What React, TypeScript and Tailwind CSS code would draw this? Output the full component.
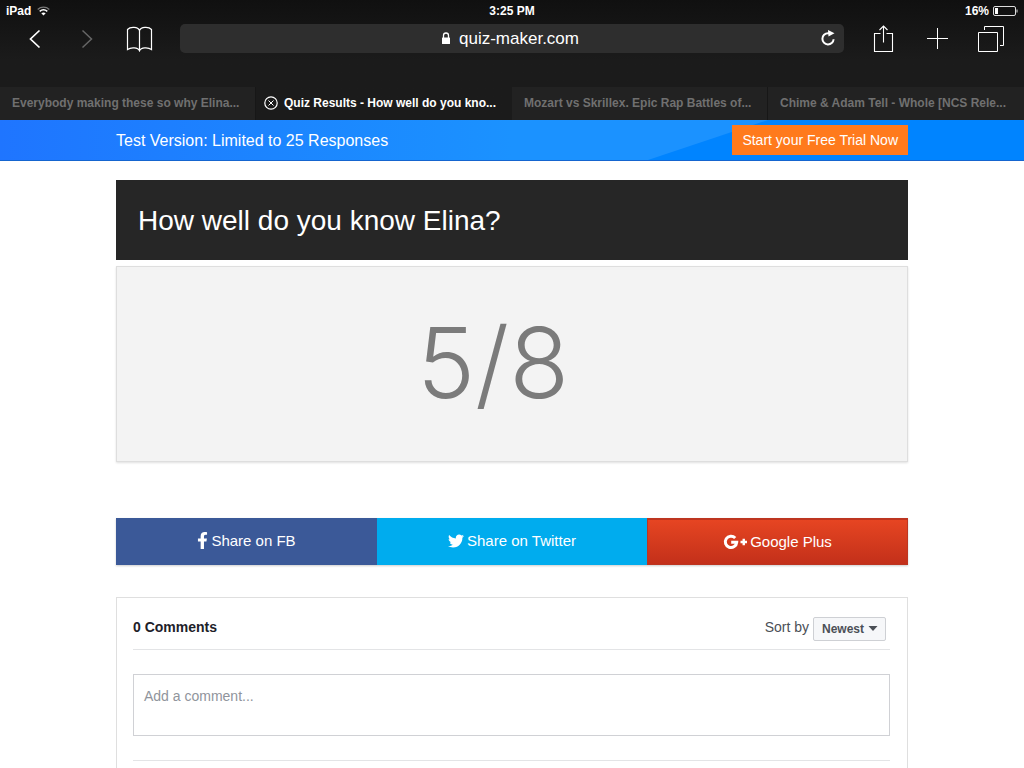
import { FaFacebookF, FaTwitter } from "react-icons/fa";

const tabs = [
  { title: "Everybody making these so why Elina...", active: false },
  { title: "Quiz Results - How well do you kno...", active: true },
  { title: "Mozart vs Skrillex. Epic Rap Battles of...", active: false },
  { title: "Chime & Adam Tell - Whole [NCS Rele...", active: false },
];

function StatusBar() {
  return (
    <div className="grid h-[22px] grid-cols-3 items-center px-[6px] text-[12px] leading-4 font-bold text-white">
      <div className="flex items-center gap-[6px]">
        <span>iPad</span>
        <svg width="13" height="10" viewBox="0 0 13 10" fill="none" aria-hidden="true">
          <path d="M.7 3.4C4 .4 9 .4 12.3 3.4" stroke="#777" strokeWidth="1.3" />
          <path d="M2.7 5.4c2.3-2 5.3-2 7.6 0" stroke="#fff" strokeWidth="1.5" />
          <path d="M4.3 7.2c1.3-1.1 3.1-1.1 4.4 0L6.5 9.5z" fill="#fff" />
        </svg>
      </div>
      <span className="text-center">3:25 PM</span>
      <div className="flex items-center justify-end gap-1">
        <span>16%</span>
        <svg width="25" height="10" viewBox="0 0 25 10" fill="none" aria-hidden="true">
          <rect x=".5" y=".5" width="22" height="9" rx="1.5" stroke="#ddd" />
          <rect x="2" y="2" width="3" height="6" fill="#fff" />
          <path d="M24 3.5v3" stroke="#ddd" />
        </svg>
      </div>
    </div>
  );
}

function Toolbar() {
  return (
    <div className="mt-[2px] flex h-[29px] items-center pr-[6px] pl-[9px] text-white">
      <button aria-label="Back" className="flex w-[52px] justify-center">
        <svg width="12" height="20" viewBox="0 0 12 20" fill="none" stroke="currentColor" strokeWidth="1.7">
          <path d="M10.5 1.5 1.5 10l9 8.5" />
        </svg>
      </button>
      <button aria-label="Forward" className="flex w-[52px] justify-center text-[#666]">
        <svg width="12" height="20" viewBox="0 0 12 20" fill="none" stroke="currentColor" strokeWidth="1.5">
          <path d="m1.5 1.5 9 8.5-9 8.5" />
        </svg>
      </button>
      <button aria-label="Bookmarks" className="flex w-[52px] justify-center">
        <svg width="27" height="26" viewBox="0 0 27 26" fill="none" stroke="currentColor" strokeWidth="1.2">
          <path d="M13.5 4.5C12 .8 4.5.3 1.5 3.500v20c3.500-2.500 10.500-2.200 12 1.300 1.500-3.500 8.500-3.800 12-1.300v-20c-3-3.200-10.500-2.700-12 1zV25" />
        </svg>
      </button>
      <div className="mr-3 ml-[15px] flex h-[29px] flex-1 items-center rounded-[5px] bg-[#2e2e2e] px-2">
        <div className="w-3" />
        <div className="flex flex-1 items-center justify-center gap-2">
          <svg width="10" height="13" viewBox="0 0 10 13" fill="none" aria-hidden="true">
            <path d="M2.5 6V3.500a2.500 2.500 0 0 1 5 0V6" stroke="#fff" strokeWidth="1.3" />
            <rect x="1" y="5.5" width="8" height="6.5" rx=".6" fill="#fff" />
          </svg>
          <input
            aria-label="Address"
            defaultValue="quiz-maker.com"
            className="field-sizing-content bg-transparent text-[17px] leading-5 outline-none"
          />
        </div>
        <button aria-label="Reload">
          <svg width="16" height="17" viewBox="0 0 16 17" fill="none">
            <path d="M13.6 9.200A5.600 5.600 0 1 1 8 3.200h1.500" stroke="#fff" strokeWidth="2" />
            <path d="M8 0 14.500 3.300 8.500 6.500z" fill="#fff" />
          </svg>
        </button>
      </div>
      <button aria-label="Share" className="flex w-[54px] justify-center">
        <svg width="21" height="28" viewBox="0 0 21 28" fill="none" stroke="currentColor">
          <path d="M7.5 8.500H1.500v18h18v-18H13.500M10.500 17.500V1M6.500 5l4-4 4 4" strokeWidth="1.1" />
        </svg>
      </button>
      <button aria-label="New tab" className="flex w-[54px] justify-center">
        <svg width="21" height="21" viewBox="0 0 21 21" stroke="currentColor">
          <path d="M10.5 0v21M0 10.5h21" />
        </svg>
      </button>
      <button aria-label="All tabs" className="flex w-[54px] justify-center">
        <svg width="26" height="26" viewBox="0 0 26 26" fill="none" stroke="currentColor">
          <path d="M.5 6.500h19v19H.5zM6.500 4V.5h19v19H22" />
        </svg>
      </button>
    </div>
  );
}

function TabStrip() {
  return (
    <nav className="mt-[34px] grid h-[33px] grid-cols-4 text-[12px] leading-4 font-bold whitespace-nowrap">
      {tabs.map((tab) =>
        tab.active ? (
          <div key={tab.title} className="flex items-center gap-[6px] overflow-hidden pb-px pl-2 text-white">
            <button aria-label="Close tab">
              <svg width="14" height="14" viewBox="0 0 14 14" fill="none" stroke="currentColor">
                <circle cx="7" cy="7" r="6.200" strokeWidth="1.2" />
                <path d="m4.5 4.500 5 5m0-5-5 5" />
              </svg>
            </button>
            <a href="#">{tab.title}</a>
          </div>
        ) : (
          <a
            key={tab.title}
            href="#"
            className="flex items-center overflow-hidden border-r border-[#171717] bg-[#222] pb-px pl-3 text-[#707070] last:border-r-0"
          >
            {tab.title}
          </a>
        )
      )}
    </nav>
  );
}

function TrialBanner() {
  return (
    <div className="relative border-b border-[#1565cf] bg-linear-to-r from-[#1f75ff] to-[#1b92ff] to-50%">
      <div className="absolute inset-y-0 right-0 w-[376px] bg-[#0084ff] [clip-path:polygon(120px_0,100%_0,100%_100%,0_100%)]" />
      <div className="relative mx-auto flex h-10 w-full max-w-[792px] items-center justify-between">
        <p className="pt-px text-[16px] leading-5 text-white">Test Version: Limited to 25 Responses</p>
        <button className="h-[30px] bg-[#ff7a1c] px-[10px] text-[14px] leading-5 text-white">
          Start your Free Trial Now
        </button>
      </div>
    </div>
  );
}

function GooglePlusIcon() {
  return (
    <svg width="24" height="16" viewBox="0 0 24 16" fill="none" stroke="currentColor" aria-hidden="true">
      <path d="M12.2 4A5.700 5.700 0 1 0 13.700 8.300H8.200" strokeWidth="3" />
      <path d="M17.5 8h6.500M20.750 4.800v6.400" strokeWidth="2.400" />
    </svg>
  );
}

function ShareButtons() {
  return (
    <div className="mt-14 grid h-[47px] grid-cols-[261fr_270fr_261fr] text-[15px] leading-5 text-white shadow-[0_1px_2px_rgba(0,0,0,0.2)]">
      <button className="flex items-center justify-center gap-[3px] bg-[#3b5998] pb-[2px]">
        <FaFacebookF className="h-[17px] w-[11px]" />
        Share on FB
      </button>
      <button className="flex items-center justify-center gap-[3px] bg-[#00acee] pb-[2px]">
        <FaTwitter className="size-4" />
        Share on Twitter
      </button>
      <button className="flex items-center justify-center gap-[3px] border border-t-2 border-[#bd3520] bg-linear-to-b from-[#e64522] to-[#c3301a]">
        <GooglePlusIcon />
        Google Plus
      </button>
    </div>
  );
}

function Comments() {
  return (
    <section className="mt-8 flex-1 border border-b-0 border-[#dfdfdf] px-4">
      <div className="mr-px flex h-[52px] items-center justify-between border-b border-[#e3e4e6] pt-[9px] pr-1">
        <h2 className="pb-[3px] text-[14px] leading-5 font-bold text-[#1d2129]">0 Comments</h2>
        <div className="flex items-center gap-1">
          <label htmlFor="sort" className="pb-[3px] text-[14px] leading-5 text-[#4b4f56]">
            Sort by
          </label>
          <div className="relative">
            <select
              id="sort"
              className="h-6 w-[73px] appearance-none rounded-[2px] border border-[#ced0d4] bg-[#f6f7f9] pl-2 text-[12px] leading-4 font-bold text-[#4b4f56]"
            >
              <option>Newest</option>
              <option>Oldest</option>
            </select>
            <svg
              className="pointer-events-none absolute top-[10px] right-2"
              width="10"
              height="5"
              viewBox="0 0 10 5"
              fill="#4b4f56"
              aria-hidden="true"
            >
              <path d="M.5 0h9L5 5z" />
            </svg>
          </div>
        </div>
      </div>
      <div className="mt-6 mr-px border-b border-[#e3e4e6] pb-6">
        <textarea
          aria-label="Add a comment"
          placeholder="Add a comment..."
          className="block h-[62px] w-full resize-none border border-[#d0d1d5] px-[10px] py-[11px] text-[14px] leading-5 outline-none placeholder:text-[#90949c]"
        />
      </div>
    </section>
  );
}

export default function App() {
  return (
    <div className="flex min-h-screen flex-col bg-white font-['Liberation_Sans',Arial,sans-serif]">
      <header className="bg-linear-to-b from-[#101010] to-[#1b1b1b] to-50%">
        <StatusBar />
        <Toolbar />
        <TabStrip />
      </header>
      <TrialBanner />
      <main className="mx-auto flex w-full max-w-[792px] flex-1 flex-col pt-[19px]">
        <h1 className="flex h-20 items-center bg-[#262626] px-[22px] pt-[2px] text-[28px] leading-9 text-white">
          How well do you know Elina?
        </h1>
        <div className="mt-[6px] flex h-[196px] items-center justify-center border border-[#dedede] bg-[#f3f3f3] pr-[38px] pb-[2px] shadow-[0_1px_2px_rgba(0,0,0,0.12)]">
          <p className="font-['Inter',sans-serif] text-[98px] leading-[100px] font-light text-[#7b7b7b]">5/8</p>
        </div>
        <ShareButtons />
        <Comments />
      </main>
    </div>
  );
}
